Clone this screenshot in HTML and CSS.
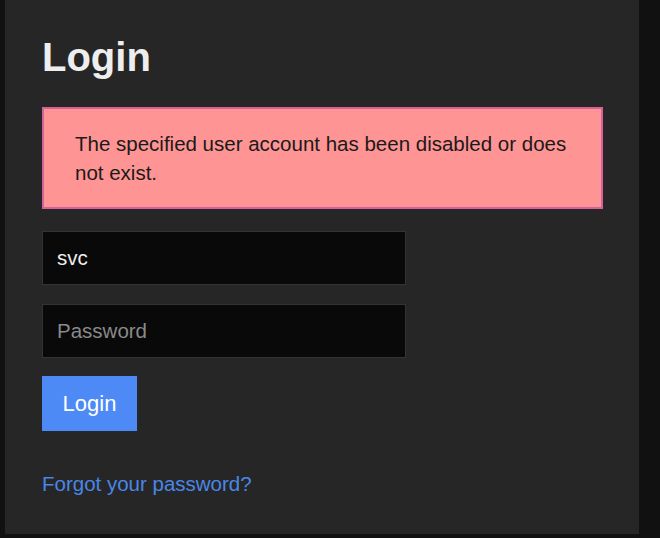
FILE: index.html
```html
<!DOCTYPE html>
<html>
<head>
<meta charset="utf-8">
<link rel="stylesheet" href="styles.css">
</head>
<body>
<div class="page">
  <main class="card">
    <h1 class="title">Login</h1>
    <div class="alert">The specified user account has been disabled or does not exist.</div>
    <form class="form">
      <input class="field" type="text" value="svc">
      <input class="field field-pass" type="password" placeholder="Password">
      <button class="btn" type="button">Login</button>
    </form>
    <a class="link" href="#">Forgot your password?</a>
  </main>
</div>
</body>
</html>
```

FILE: styles.css
```css
html, body {
  margin: 0;
  padding: 0;
  background: #111111;
  font-family: "Liberation Sans", Arial, sans-serif;
  font-size: 20.5px;
}
.page {
  padding: 0 21px 4px 5px;
  height: 538px;
  box-sizing: border-box;
}
.card {
  background: #262626;
  height: 534px;
  box-sizing: border-box;
  padding: 35px 36px 0 37px;
  display: flex;
  flex-direction: column;
  align-items: flex-start;
}
.title {
  margin: 0;
  font-size: 40px;
  line-height: 45px;
  font-weight: bold;
  color: #eeeeee;
}
.alert {
  margin-top: 27px;
  align-self: stretch;
  background: #ff9494;
  border: 2px solid #d5609a;
  padding: 20px 31px 20px 31px;
  color: #1a1a1a;
  line-height: 29px;
}
.form {
  margin-top: 22px;
  display: flex;
  flex-direction: column;
  align-items: flex-start;
}
.field {
  width: 364px;
  height: 54px;
  box-sizing: border-box;
  background: #090909;
  border: 1px solid #333333;
  padding: 0 14px;
  color: #eeeeee;
  font-family: "Liberation Sans", Arial, sans-serif;
  font-size: 20.5px;
  outline: none;
  margin: 0;
}
.field-pass {
  margin-top: 19px;
}
.field::placeholder {
  color: #8a8a8a;
}
.btn {
  margin-top: 18px;
  width: 95px;
  height: 55px;
  border: none;
  background: #4d8af5;
  color: #ffffff;
  font-family: "Liberation Sans", Arial, sans-serif;
  font-size: 22px;
  padding: 0;
}
.link {
  margin-top: 38px;
  color: #4a86e8;
  text-decoration: none;
  line-height: 29px;
}
```
